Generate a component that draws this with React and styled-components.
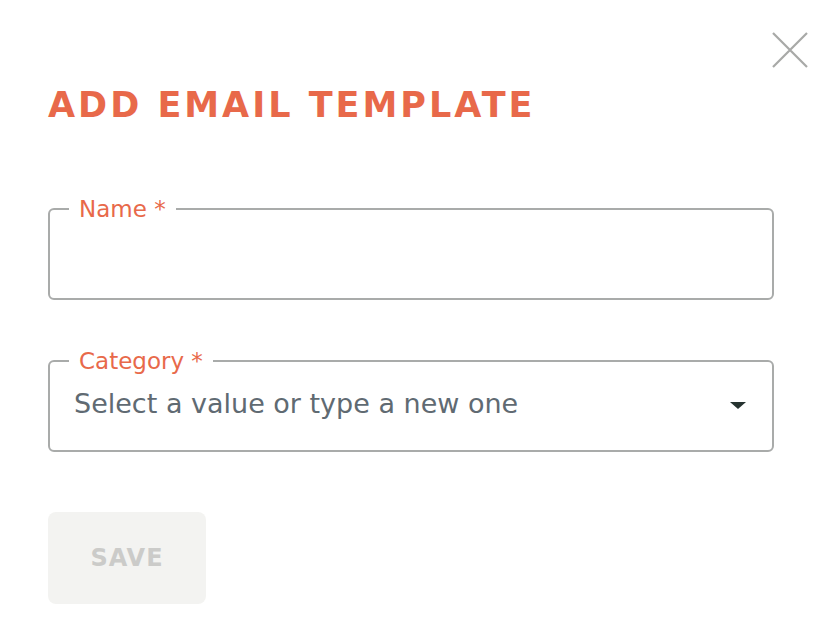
import React from 'react';
import styled, { createGlobalStyle } from 'styled-components';

const GlobalStyle = createGlobalStyle`
  body {
    margin: 0;
    background: #ffffff;
    font-family: 'DejaVu Sans', 'Open Sans', sans-serif;
  }
`;

const Modal = styled.div`
  position: relative;
  width: 836px;
  height: 626px;
  box-sizing: border-box;
  padding: 83px 62px 0 48px;
  display: flex;
  flex-direction: column;
`;

const CloseButton = styled.button`
  position: absolute;
  top: 32px;
  right: 28px;
  width: 36px;
  height: 36px;
  padding: 0;
  border: none;
  background: none;
  cursor: pointer;
`;

const Title = styled.h1`
  margin: 0;
  font-size: 35px;
  font-weight: 700;
  letter-spacing: 3px;
  line-height: 44px;
  color: #e8694a;
`;

const Form = styled.form`
  display: flex;
  flex-direction: column;
  margin-top: 71px;
`;

const Field = styled.fieldset`
  margin: 0 0 ${({ $gap }) => $gap}px;
  height: 102px;
  box-sizing: border-box;
  padding: 0 24px;
  border: 2px solid #a9abaa;
  border-radius: 6px;
`;

const Legend = styled.legend`
  padding: 0 10px;
  margin-left: -5px;
  font-size: 23px;
  line-height: 22px;
  color: #e8694a;
`;

const Row = styled.div`
  height: 62px;
  display: flex;
  align-items: center;
`;

const TextInput = styled.input`
  flex: 1;
  border: none;
  outline: none;
  background: transparent;
  font-family: inherit;
  font-size: 27px;
  color: #2f3a40;
  padding: 0;
`;

const SelectValue = styled.div`
  flex: 1;
  font-size: 27px;
  color: #606a72;
`;

const Caret = styled.span`
  width: 0;
  height: 0;
  border-left: 8px solid transparent;
  border-right: 8px solid transparent;
  border-top: 7px solid #263330;
  margin: 4px 2px 0 0;
`;

const SaveButton = styled.button`
  width: 158px;
  height: 92px;
  border: none;
  border-radius: 8px;
  background: #f3f3f1;
  color: #cbcbc9;
  font-family: inherit;
  font-size: 24px;
  font-weight: 700;
  letter-spacing: 1px;
`;

export default function App() {
  return (
    <>
      <GlobalStyle />
      <Modal>
        <CloseButton aria-label="Close">
          <svg width="36" height="36" viewBox="0 0 36 36">
            <path d="M1 1 L35 35 M35 1 L1 35" stroke="#a8a9a7" strokeWidth="2.2" fill="none" />
          </svg>
        </CloseButton>
        <Title>ADD EMAIL TEMPLATE</Title>
        <Form>
          <Field $gap={50}>
            <Legend>Name *</Legend>
            <Row>
              <TextInput type="text" />
            </Row>
          </Field>
          <Field $gap={60}>
            <Legend>Category *</Legend>
            <Row>
              <SelectValue>Select a value or type a new one</SelectValue>
              <Caret />
            </Row>
          </Field>
          <SaveButton type="button" disabled>SAVE</SaveButton>
        </Form>
      </Modal>
    </>
  );
}
